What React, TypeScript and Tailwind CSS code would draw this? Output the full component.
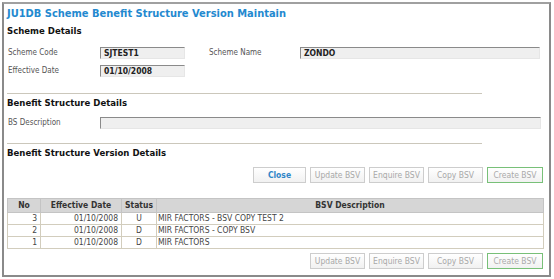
const font = "font-['DejaVu_Sans_Condensed','DejaVu_Sans',sans-serif]";

const rows = [
  { no: 3, date: "01/10/2008", status: "U", desc: "MIR FACTORS - BSV COPY TEST 2" },
  { no: 2, date: "01/10/2008", status: "D", desc: "MIR FACTORS - COPY BSV" },
  { no: 1, date: "01/10/2008", status: "D", desc: "MIR FACTORS" },
];

function Field({ value, width }: { value: string; width: string }) {
  return (
    <div
      className={`${width} h-[12px] flex items-center pl-[3px] bg-[#efefef] border-t border-l border-t-[#8a8a8a] border-l-[#8a8a8a] border-b border-r border-b-[#e6e6e6] border-r-[#e6e6e6] text-[8.5px] font-bold text-[#222] leading-none`}
    >
      {value}
    </div>
  );
}

function Section({ title }: { title: string }) {
  return (
    <div className="h-[18px] flex items-center text-[9.5px] font-bold text-[#111] leading-none">{title}</div>
  );
}

function Btn({ label, kind }: { label: string; kind?: "close" | "create" }) {
  const base =
    "h-[16px] flex items-center justify-center border text-[8.5px] leading-none bg-gradient-to-b from-white to-[#f1f1f1]";
  if (kind === "close")
    return <div className={`${base} w-[53px] border-[#cdcdcd] text-[#2f86c8] font-bold`}>{label}</div>;
  if (kind === "create")
    return <div className={`${base} w-[56px] border-[#78c078] text-[#aaaaaa]`}>{label}</div>;
  return <div className={`${base} w-[55px] border-[#cdcdcd] text-[#a8a8a8]`}>{label}</div>;
}

export default function App() {
  return (
    <div className={`w-[554px] h-[279px] bg-white pt-[2px] pl-[2px] ${font}`}>
      <div className="w-[549px] h-[275px] border-2 border-[#8a8a8a] border-t-[#a0a0a0] pl-[3px] pr-[5px] flex flex-col">
        <div className="h-[18px] flex items-center text-[11px] font-bold text-[#2389cf] leading-none">
          JU1DB Scheme Benefit Structure Version Maintain
        </div>
        <Section title="Scheme Details" />

        <div className="mt-[7px] h-[12px] flex items-center pl-[1px] text-[8px] text-[#555] leading-none">
          <div className="w-[92px]">Scheme Code</div>
          <Field value="SJTEST1" width="w-[85px]" />
          <div className="w-[24px]" />
          <div className="w-[91px]">Scheme Name</div>
          <Field value="ZONDO" width="w-[240px]" />
        </div>
        <div className="mt-[6px] h-[12px] flex items-center pl-[1px] text-[8px] text-[#555] leading-none">
          <div className="w-[92px]">Effective Date</div>
          <Field value="01/10/2008" width="w-[85px]" />
        </div>

        <div className="mt-[16px] w-[475px] h-px shrink-0 bg-[#cbc7bb]" />
        <Section title="Benefit Structure Details" />
        <div className="mt-[5px] h-[12px] flex items-center pl-[1px] text-[8px] text-[#555] leading-none">
          <div className="w-[92px]">BS Description</div>
          <Field value="" width="w-[441px]" />
        </div>

        <div className="mt-[14px] w-[475px] h-px shrink-0 bg-[#cbc7bb]" />
        <Section title="Benefit Structure Version Details" />

        <div className="mt-[5px] h-[16px] flex justify-end gap-[4px] pr-[1px]">
          <Btn label="Close" kind="close" />
          <Btn label="Update BSV" />
          <Btn label="Enquire BSV" />
          <Btn label="Copy BSV" />
          <Btn label="Create BSV" kind="create" />
        </div>

        <table className="mt-[15px] w-[537px] border-collapse text-[8.5px] text-[#444] leading-none">
          <thead>
            <tr className="h-[14px] bg-[#d6d6d6] text-[#333]">
              <th className="w-[33px] p-0 border border-[#c4c4c4] font-bold">No</th>
              <th className="w-[81px] p-0 border border-[#c4c4c4] font-bold">Effective Date</th>
              <th className="w-[35px] p-0 border border-[#c4c4c4] font-bold">Status</th>
              <th className="p-0 border border-[#c4c4c4] font-bold">BSV Description</th>
            </tr>
          </thead>
          <tbody>
            {rows.map((r) => (
              <tr key={r.no} className="h-[12px]">
                <td className="p-0 border border-[#d2cdbd] text-right pr-[3px]">{r.no}</td>
                <td className="p-0 border border-[#d2cdbd] text-right pr-[3px]">{r.date}</td>
                <td className="p-0 border border-[#d2cdbd] text-center">{r.status}</td>
                <td className="p-0 border border-[#d2cdbd] pl-[1px]">{r.desc}</td>
              </tr>
            ))}
          </tbody>
        </table>

        <div className="mt-[4px] h-[16px] flex justify-end gap-[4px] pr-[1px]">
          <Btn label="Update BSV" />
          <Btn label="Enquire BSV" />
          <Btn label="Copy BSV" />
          <Btn label="Create BSV" kind="create" />
        </div>
      </div>
    </div>
  );
}
